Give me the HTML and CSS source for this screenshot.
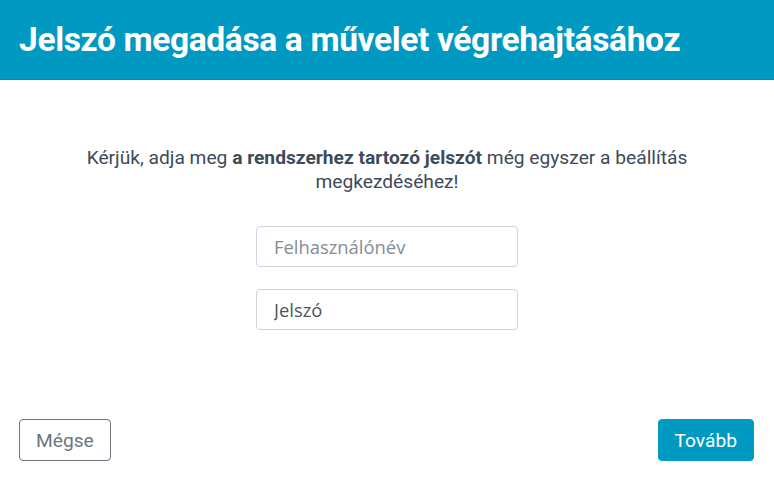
FILE: index.html
```html
<!DOCTYPE html>
<html lang="hu">
<head>
    <meta charset="UTF-8">
    <meta name="viewport" content="width=device-width, initial-scale=1.0">
    <title>Jelszó megadása</title>
    <link rel="stylesheet" href="styles.css">
</head>
<body>
    <div class="dialog">
        <div class="dialog-header">
            <h1>Jelszó megadása a művelet végrehajtásához</h1>
        </div>

        <!-- Tartalom -->
        <div class="dialog-body">
            <p class="intro">Kérjük, adja meg <strong>a rendszerhez tartozó jelszót</strong> még egyszer a beállítás megkezdéséhez!</p>
            <form class="login-form">
                <input type="text" class="form-input" placeholder="Felhasználónév">
                <input type="password" class="form-input" placeholder="Jelszó">
            </form>
        </div>

        <!-- Gombok -->
        <div class="dialog-footer">
            <button class="btn btn-outline">Mégse</button>
            <button class="btn btn-primary">Tovább</button>
        </div>
    </div>
</body>
</html>
```

FILE: styles.css
```css
body {
    font-family: Roboto, "Liberation Sans", sans-serif;
    background-color: #fff;
    color: #3d4a59;
    margin: 0;
    padding: 0;
}
.dialog {
    display: flex;
    flex-direction: column;
    height: 480px;
}
.dialog-header {
    background-color: #0099c2;
    border-bottom: 1px solid #0a86a8;
    height: 80px;
    box-sizing: border-box;
    display: flex;
    align-items: center;
    padding: 0 19px;
}
.dialog-header h1 {
    margin: 0;
    color: #fff;
    font-size: 33.6px;
    font-weight: 700;
    letter-spacing: -0.38px;
}
.dialog-body {
    flex: 1;
    padding-top: 66px;
    text-align: center;
}
.intro {
    margin: 0 auto;
    max-width: 640px;
    font-size: 19.2px;
    line-height: 24px;
}
.intro strong {
    font-weight: 700;
}
.login-form {
    display: flex;
    flex-direction: column;
    align-items: center;
    gap: 22px;
    margin-top: 32px;
}
.form-input {
    width: 262px;
    height: 41px;
    box-sizing: border-box;
    border: 1px solid #ccd4de;
    border-radius: 4px;
    padding: 0 17px;
    font-family: "Open Sans", sans-serif;
    font-size: 18.4px;
    color: #495057;
    outline: none;
}
.form-input::placeholder {
    color: #858c94;
}
.form-input[type="password"]::placeholder {
    color: #4e555c;
}
.dialog-footer {
    display: flex;
    justify-content: space-between;
    padding: 0 20px 19px 19px;
}
.btn {
    height: 42px;
    padding: 0 16px;
    border-radius: 4px;
    font-family: Roboto, sans-serif;
    font-size: 19.2px;
    cursor: pointer;
}
.btn-outline {
    background-color: #fff;
    border: 1px solid #6c757d;
    color: #6c757d;
}
.btn-primary {
    background-color: #0099c2;
    border: 1px solid #0099c2;
    color: #fff;
}
```
